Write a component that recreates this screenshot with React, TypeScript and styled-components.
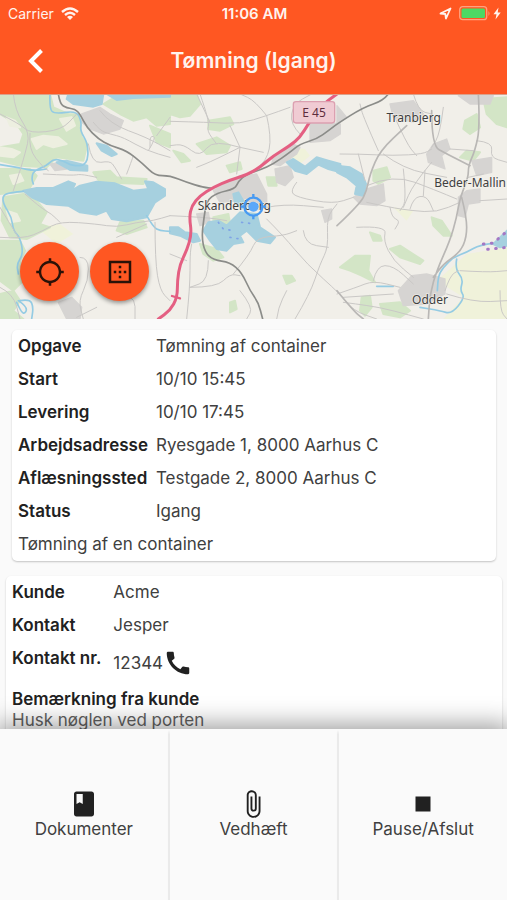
import React from "react";
import styled, { createGlobalStyle } from "styled-components";
import { MdAttachFile, MdBook, MdBorderOuter, MdCall, MdGpsNotFixed, MdStop } from "react-icons/md";

const GlobalStyle = createGlobalStyle`
  *, *::before, *::after { box-sizing: border-box; }
  body { margin: 0; background: #fafafa; }
  button { font: inherit; color: inherit; border: 0; padding: 0; cursor: pointer; }
`;

const Screen = styled.div`
  display: flex;
  flex-direction: column;
  height: 100vh;
  overflow: hidden;
  background: #fafafa;
  color: #404040;
  font-family: Inter, sans-serif;
  font-size: 17px;
  line-height: 21px;
`;

const Header = styled.header`
  flex: none;
  background: #ff5722;
  color: #fff3ee;
`;

const StatusBar = styled.div`
  display: grid;
  grid-template-columns: 1fr auto 1fr;
  align-items: center;
  height: 27px;
  padding: 0 6px 0 8px;
  font-size: 14px;
`;

const StatusGroup = styled.div<{ $end?: boolean }>`
  display: flex;
  align-items: center;
  gap: 7px;
  justify-content: ${(p) => (p.$end ? "flex-end" : "flex-start")};
`;

const Clock = styled.time`
  font-size: 15px;
  font-weight: 600;
`;

const AppBar = styled.div`
  display: grid;
  grid-template-columns: 70px 1fr 70px;
  align-items: center;
  height: 67px;
`;

const BackButton = styled.button`
  display: grid;
  place-items: center;
  height: 66px;
  background: none;
`;

const Title = styled.h1`
  margin: 0;
  text-align: center;
  font-size: 21px;
  line-height: 28px;
  font-weight: 600;
`;

const Content = styled.main`
  flex: 1;
  min-height: 0;
  overflow: hidden;
`;

const MapPanel = styled.section`
  position: relative;
  height: 225px;
  background: #f2efe9;
  overflow: hidden;
`;

const MapDrawing = styled.svg`
  display: block;
  width: 100%;
  height: 100%;
  font-family: "Noto Sans", sans-serif;
`;

const MapActions = styled.div`
  position: absolute;
  left: 20px;
  bottom: 18px;
  display: flex;
  gap: 11px;
`;

const RoundButton = styled.button`
  display: grid;
  place-items: center;
  width: 59px;
  height: 59px;
  border-radius: 50%;
  background: #ff5722;
  color: #2a1208;
  box-shadow: 0 2px 4px rgba(0, 0, 0, 0.4);
`;

const Card = styled.section<{ $wide?: boolean }>`
  margin: ${(p) => (p.$wide ? "15px 5px 0 6px" : "11px 11px 0 12px")};
  padding: 0 6px ${(p) => (p.$wide ? "12px" : "0")};
  border-radius: 5px;
  background: #fff;
  box-shadow: 0 1px 2px rgba(0, 0, 0, 0.22);
`;

const Details = styled.table<{ $gap: number }>`
  border-collapse: collapse;

  th {
    padding-right: ${(p) => p.$gap}px;
  }
`;

const Label = styled.th`
  padding: 6px 0;
  text-align: left;
  vertical-align: top;
  font-weight: 600;
  color: #212121;
  white-space: nowrap;
`;

const Value = styled.td`
  padding: 6px 0;
`;

const Note = styled.p`
  margin: 0;
  padding: 6px 0;
`;

const Phone = styled.a`
  display: flex;
  align-items: center;
  color: inherit;
  text-decoration: none;

  svg {
    color: #212121;
  }
`;

const RemarkTitle = styled.h2`
  margin: 5px 0 0;
  font-size: 17px;
  line-height: 21px;
  font-weight: 600;
  color: #212121;
`;

const Remark = styled.p`
  margin: 0;
  color: #616161;
`;

const ActionBar = styled.nav`
  position: relative;
  flex: none;
  display: grid;
  grid-template-columns: repeat(3, 1fr);
  gap: 2px;
  background: #fafafa;
  box-shadow: 0 0 24px 4px rgba(0, 0, 0, 0.4);
`;

const Action = styled.button`
  display: flex;
  flex-direction: column;
  align-items: center;
  justify-content: center;
  min-height: 171px;
  background: #fafafa;
  box-shadow: 0 3px 3px rgba(0, 0, 0, 0.12);

  svg {
    color: #212121;
  }
`;

const task = [
  ["Opgave", "Tømning af container"],
  ["Start", "10/10 15:45"],
  ["Levering", "10/10 17:45"],
  ["Arbejdsadresse", "Ryesgade 1, 8000 Aarhus C"],
  ["Aflæsningssted", "Testgade 2, 8000 Aarhus C"],
  ["Status", "Igang"],
];

const actions = [
  { label: "Dokumenter", Icon: MdBook },
  { label: "Vedhæft", Icon: MdAttachFile },
  { label: "Pause/Afslut", Icon: MdStop },
];

/* Rounds the corners of open polylines written as "M x y L x y x y ...". */
function smooth(paths: string[]) {
  return paths
    .flatMap((path) => path.split("M").filter(Boolean))
    .map((line) => {
      const n = (line.match(/-?\d+/g) ?? []).map(Number);
      let d = `M${n[0]} ${n[1]}`;
      for (let i = 2; i < n.length - 2; i += 2) {
        d += `Q${n[i]} ${n[i + 1]} ${(n[i] + n[i + 2]) / 2} ${(n[i + 1] + n[i + 3]) / 2}`;
      }
      return `${d}L${n[n.length - 2]} ${n[n.length - 1]}`;
    })
    .join("");
}

const forests = [
  "M0 0H150L160 40 205 60 238 62 245 130 262 150 250 200 170 190 140 220 60 215 0 200V160L60 150 70 120 50 90 0 60Z",
  "M310 30L340 12H510V90L470 95 440 70 400 80 360 60Z",
  "M0 225L90 225 110 245 85 290 0 300Z",
  "M10 310L70 300 110 320 140 355 120 390 150 400 80 435 30 430 5 380Z",
  "M0 440L60 440 75 470 60 500 70 560 40 590 0 560Z",
  "M280 235L330 230 350 250 440 255 430 270 300 265Z",
  "M360 385L430 380 440 400 380 420 350 410Z",
  "M450 95L510 120V160L470 145Z",
  "M0 600L40 590 60 620 40 650 70 675H0Z",
  "M510 0H590L600 30 570 65 540 70 510 60Z",
  "M625 80L690 70 700 90 660 110 625 105Z",
  "M590 150L650 130 690 155 680 175 620 180Z",
  "M680 215L720 205 725 225 690 235Z",
  "M520 170L550 180 570 200 545 205Z",
  "M640 370L685 360 690 385 660 400 640 395Z",
  "M600 450L650 465 670 490 640 500 610 480Z",
  "M850 545L875 545 885 560 860 570Z",
  "M800 250L825 250 830 275 805 275Z",
  "M690 625L705 620 710 645 690 655Z",
  "M1450 15L1521 10V100L1490 90 1460 60Z",
  "M1395 80L1430 60 1440 100 1410 120 1390 105Z",
  "M1120 230L1160 220 1170 250 1135 270 1120 260Z",
  "M1295 370L1325 380 1355 425 1330 425 1300 395Z",
  "M1110 415L1140 425 1145 440 1120 440Z",
  "M1020 520L1065 485 1110 485 1105 530 1125 565 1085 545 1050 530Z",
  "M1170 465L1200 455 1270 500 1260 510 1200 490Z",
  "M1085 610L1110 605 1115 640 1095 665 1080 650Z",
  "M1140 630L1200 625 1230 650 1200 670 1150 660Z",
  "M1380 190L1400 170 1440 175 1420 200Z",
];

const clearings = [
  "M20 70L45 80 60 100 30 95Z",
  "M95 135L130 125 175 130 200 150 160 160 130 150 110 165Z",
  "M0 160L35 165 60 175 40 190 0 185Z",
  "M180 75L215 70 225 95 200 110Z",
  "M30 245L60 240 70 260 40 270Z",
  "M20 350L50 360 60 380 30 385Z",
];

const towns = [
  "M245 60L300 40 330 60 370 80 360 105 310 120 270 105 245 85Z",
  "M175 625L215 610 245 640 240 675H200Z",
  "M150 210L190 205 200 225 165 230Z",
  "M640 290L720 245 770 240 800 300 800 340 760 350 720 320 660 325Z",
  "M590 360L625 355 630 385 600 395Z",
  "M820 190L880 150 900 160 890 180 840 215 815 210Z",
  "M825 225L870 215 880 250 855 275 830 265Z",
  "M930 80L1021 90V120L990 140 930 145Z",
  "M965 350L995 345 995 375 975 385Z",
  "M1060 310L1100 285 1150 270 1155 320 1130 335 1080 330Z",
  "M1280 180L1300 150 1340 135 1350 165 1325 185 1335 225 1285 205Z",
  "M1170 30L1240 20 1270 60 1240 85 1180 70Z",
  "M1375 5L1480 5 1470 30 1410 30Z",
  "M1400 290L1440 285 1440 325 1405 330 1395 370 1375 365 1375 310Z",
  "M1415 200L1475 190 1475 235 1430 245Z",
  "M1195 590L1235 545 1280 540 1335 555 1335 600 1280 630 1210 635Z",
  "M1011 35L1040 70 1011 90Z",
];

const lakes = [
  "M70 290L110 282 160 282 205 262 225 270 215 290 240 275 290 263 345 268 400 290 445 285 435 262 460 265 495 285 495 305 465 325 440 370 380 382 335 375 320 350 290 362 240 355 205 335 140 330 95 310Z",
  "M205 0H310L305 30 280 38 220 30 200 15Z",
  "M320 0H510V8L400 12 350 18Z",
  "M290 148L320 155 350 180 335 186 305 170Z",
  "M170 205L200 200 262 215 262 230 210 228Z",
  "M510 400L535 400 555 415 590 420 600 440 580 445 540 425 510 418Z",
  "M610 410L625 385 655 380 680 395 720 355 770 360 780 400 825 430 810 448 770 440 740 410 720 425 730 445 700 450 680 470 650 465 630 440Z",
  "M860 205L880 195 915 218 950 190 985 200 1021 210V235L985 225 955 212 920 240 885 230Z",
  "M1011 215L1050 220 1085 240 1098 270 1090 305 1065 300 1070 275 1040 250 1011 235Z",
  "M1480 450L1521 410V455L1500 460Z",
  "M700 300L715 295 735 330 725 345 705 325Z",
];

const streams = [
  "M150 0L148 45 165 60 230 50 245 85 240 110 265 150 262 215 215 215 190 200 160 195 140 215 100 230 95 255 100 270",
  "M0 212L60 222 100 230 140 225",
  "M70 292L30 295 8 305 10 330 35 370 40 410 60 430 70 480 50 510 55 540",
  "M440 365L460 400 480 410 510 412",
  "M60 620L90 615 100 640 95 675",
  "M55 620L85 640 70 665 50 625",
  "M1480 448L1440 452 1400 475 1360 490 1330 520 1315 545 1312 590",
  "M1370 495L1365 525 1390 555 1380 590 1395 610 1355 660 1320 650 1260 640",
  "M1130 577L1180 577",
];

const minorRoads = [
  "M40 0L45 50 90 118 75 180 60 230 40 290",
  "M0 60L60 90 90 118 185 108 230 60",
  "M90 118L85 165 130 220 145 230",
  "M280 85L300 110 330 120 370 130 440 170 510 190",
  "M300 50L330 90 440 130 510 170",
  "M265 150L275 210 330 200 345 220 365 255",
  "M380 240L395 200 400 185",
  "M130 240L220 245 240 240 290 250",
  "M0 430L70 435 130 410 180 382 290 390 350 400 410 385 460 380 510 365",
  "M75 300L120 340 155 360 180 385",
  "M0 340L30 390 55 430",
  "M350 430L440 390M465 385L465 500 480 590 510 620",
  "M240 490L265 490 265 560 235 620 250 675",
  "M340 590L405 600 405 675",
  "M0 580L40 600 60 675M290 640L230 670",
  "M445 170L470 130 450 125 450 160M470 125L510 70",
  "M510 82L630 85 720 90 800 65 870 40M630 85L590 0",
  "M800 65L765 20 720 0M800 65L815 130 800 200 750 240",
  "M720 160L640 135 600 190 550 150 510 155M720 160L790 175M720 160L710 240M720 160L640 200 590 220M720 160L690 95",
  "M600 0L630 85 620 110 650 150",
  "M900 120L870 90 880 30 935 0",
  "M800 375L850 425 920 510 1021 600 1060 650 1130 675",
  "M510 480L560 500M510 365L620 370 680 380",
  "M560 675L570 580 570 480 575 450M625 500L625 560 570 580",
  "M570 580L650 580 690 540 720 545",
  "M720 590L760 640 740 675M830 675L835 640 860 590",
  "M700 540L750 480 770 430 850 425 890 410",
  "M885 675L930 600 960 510 985 460 980 370 1011 330",
  "M890 265L870 290 890 310 1000 330 1060 310",
  "M800 340L850 330 970 340M910 410L915 450 985 460",
  "M1020 180L1080 180 1180 185 1270 180 1295 165M1075 180L1095 260",
  "M1135 170L1090 70 1080 30M1180 60L1220 150 1250 185",
  "M1150 180L1210 225 1340 250M1210 225L1220 320 1200 350",
  "M1295 205L1240 270 1210 340M1100 275L1180 240 1310 290 1370 315",
  "M1100 325L1170 340 1235 350 1310 355 1380 325",
  "M1070 400L1160 395 1150 440 1180 500 1240 550",
  "M1170 340L1175 370 1200 380 1185 405",
  "M1230 345L1240 310 1280 305 1300 350M1270 305L1275 230",
  "M1240 0L1255 50 1295 60M1330 40L1320 120 1295 160",
  "M1430 140L1480 145 1470 190 1521 205M1420 170L1350 165",
  "M1405 250L1450 240M1440 320L1521 315",
  "M1011 600L1070 580 1120 560 1200 580M1120 560L1130 515 1180 515 1240 570",
  "M1030 625L1110 635 1180 650 1270 675M1030 610L1180 600",
  "M1340 600L1420 625 1521 620M1380 530L1460 535 1521 530M1500 590L1500 650 1521 675",
  "M1335 590L1350 545 1375 530",
];

const mainRoads = [
  "M1435 0L1440 100 1425 170 1405 215 1405 250 1380 310 1370 370 1350 440 1310 530 1290 600 1285 675",
  "M1385 310L1400 370 1400 430 1380 475 1330 510 1300 550",
  "M1011 395L1080 330 1100 290 1110 240 1140 170 1220 95",
  "M1011 590L1060 650 1090 675",
  "M1295 50L1295 155 1340 180 1410 215",
];

const railways = [
  "M175 0L180 30 200 42 225 45 240 60 260 100 295 135 330 155 380 170 430 210 465 245 510 245 560 265 610 280 640 283",
  "M1165 0L1150 20 1090 40 1011 90 985 110 950 135 900 150 870 175 820 210 780 228 740 240 715 262 705 285 650 297 620 320 612 370 605 430 615 475 640 498 690 505 725 535 750 590 775 625 788 675",
];

const motorway = [
  "M1011 0L960 35 925 90 900 130 870 155 820 185 780 220 740 243 690 258 640 280 600 305 575 335 568 370 575 420 560 470 540 510 532 560 532 610 510 650 475 675",
];

function MapArt() {
  return (
    <MapDrawing viewBox="0 0 1521 675" preserveAspectRatio="xMidYMid slice" role="img" aria-label="Kort over Skanderborg">
      <rect width="1521" height="675" fill="#f1efe9" />
      <path d="M1311 560L1400 480 1521 460V675H1330L1390 610Z" fill="#f0f2da" />
      <path d="M870 160L915 165 930 185 900 210 875 195Z M110 400L180 390 220 420 170 450Z M1180 340L1240 350 1220 380Z" fill="#f0f2da" />
      <path d={forests.join("")} fill="#d3e5c6" stroke="#d3e5c6" strokeWidth="6" strokeLinejoin="round" />
      <path d={clearings.join("")} fill="#edefe0" stroke="#edefe0" strokeWidth="6" strokeLinejoin="round" />
      <path d={towns.join("")} fill="#d6d4d2" stroke="#d6d4d2" strokeWidth="4" strokeLinejoin="round" />
      <path d={lakes.join("")} fill="#a6d0df" stroke="#a6d0df" strokeWidth="6" strokeLinejoin="round" />
      <g fill="none" strokeLinejoin="round" strokeLinecap="round">
        <path d={smooth(streams)} stroke="#94cbe3" strokeWidth="5" />
        <path d={smooth(minorRoads)} stroke="#cac8c6" strokeWidth="3" />
        <path d={smooth(mainRoads)} stroke="#b9b7b5" strokeWidth="5" />
        <path d={smooth(railways)} stroke="#8b8c89" strokeWidth="5" />
        <path d={smooth(motorway)} stroke="#e45f82" strokeWidth="9" />
        <path d="M516 606L540 613" stroke="#e45f82" strokeWidth="7" />
        <path d="M655 385L670 405 700 410M690 430L720 435M725 385L765 390" stroke="#7fa3e6" strokeWidth="5" strokeDasharray="3 18" />
        <path d="M1450 450L1480 447 1521 412M1463 466L1521 460" stroke="#a477c4" strokeWidth="9" strokeDasharray="2 22" />
      </g>
      <path d="M0 0H1521V3H0Z" fill="#dba08a" />
      <rect x="880" y="23" width="124" height="64" rx="8" fill="#f0cbd3" stroke="#dca0b1" strokeWidth="4" />
      <g fill="#3f3f3f" fontSize="36" stroke="#f5f3ee" strokeWidth="5" strokeOpacity="0.7" paintOrder="stroke" textAnchor="middle">
        <text x="942" y="68" fontSize="36" fill="#5d2c3d" stroke="none">E 45</text>
        <text x="1241" y="84">Tranbjerg</text>
        <text x="703" y="348">Skanderborg</text>
        <text x="1518" y="278" textAnchor="end">Beder-Mallin</text>
        <text x="1290" y="630">Odder</text>
      </g>
      <g stroke="#479af2" strokeWidth="7" fill="none">
        <circle cx="760" cy="338" r="27" />
        <path d="M760 300V312M760 364V376M722 338H734M786 338H798" />
        <circle cx="760" cy="338" r="15" fill="#5ba8fa" stroke="none" />
      </g>
    </MapDrawing>
  );
}

function WifiIcon() {
  return (
    <svg width="18" height="14" viewBox="0 0 18 14" fill="none" stroke="currentColor" strokeWidth="2.4" aria-hidden="true">
      <path d="M1 5Q9 -2 17 5M4 8Q9 3.600 14 8" />
      <path d="M6 10Q9 7.600 12 10L9 13Z" fill="currentColor" stroke="none" />
    </svg>
  );
}

function LocationIcon() {
  return (
    <svg width="13" height="13" viewBox="0 0 13 13" fill="none" stroke="currentColor" strokeWidth="1.8" strokeLinejoin="round" aria-hidden="true">
      <path d="M1.500 6.500L11.500 1.500 7 11.500 6.300 7Z" />
    </svg>
  );
}

function BatteryIcon() {
  return (
    <svg width="42" height="15" viewBox="0 0 42 15" aria-hidden="true">
      <rect x="0.700" y="0.700" width="27" height="13" rx="3" fill="none" stroke="#ffa17f" strokeWidth="1.300" />
      <rect x="2.500" y="2.500" width="23.500" height="9.500" rx="1.500" fill="#4cd964" />
      <path d="M29.500 5V10Q31.500 7.500 29.500 5Z" fill="#ffa17f" />
      <path d="M39.500 1.500L34.500 8.300H37.500L36.500 13.500 41.700 6.500H38.700Z" fill="currentColor" />
    </svg>
  );
}

export default function App() {
  return (
    <Screen>
      <GlobalStyle />
      <Header>
        <StatusBar>
          <StatusGroup>
            <span>Carrier</span>
            <WifiIcon />
          </StatusGroup>
          <Clock>11:06 AM</Clock>
          <StatusGroup $end>
            <LocationIcon />
            <BatteryIcon />
          </StatusGroup>
        </StatusBar>
        <AppBar>
          <BackButton type="button" aria-label="Tilbage">
            <svg width="18" height="26" viewBox="0 0 18 26" fill="none" stroke="#fff" strokeWidth="4" aria-hidden="true">
              <path d="M15.500 2.500L5 13 15.500 23.500" />
            </svg>
          </BackButton>
          <Title>Tømning (Igang)</Title>
        </AppBar>
      </Header>
      <Content>
        <MapPanel>
          <MapArt />
          <MapActions>
            <RoundButton type="button" aria-label="Find min position">
              <MdGpsNotFixed size={30} />
            </RoundButton>
            <RoundButton type="button" aria-label="Vis hele området">
              <MdBorderOuter size={30} />
            </RoundButton>
          </MapActions>
        </MapPanel>
        <Card>
          <Details $gap={8}>
            <tbody>
              {task.map(([label, value]) => (
                <tr key={label}>
                  <Label scope="row">{label}</Label>
                  <Value>{value}</Value>
                </tr>
              ))}
            </tbody>
          </Details>
          <Note>Tømning af en container</Note>
        </Card>
        <Card $wide>
          <Details $gap={12}>
            <tbody>
              <tr>
                <Label scope="row">Kunde</Label>
                <Value>Acme</Value>
              </tr>
              <tr>
                <Label scope="row">Kontakt</Label>
                <Value>Jesper</Value>
              </tr>
              <tr>
                <Label scope="row">Kontakt nr.</Label>
                <Value>
                  <Phone href="tel:12344">
                    12344
                    <MdCall size={30} aria-hidden="true" />
                  </Phone>
                </Value>
              </tr>
            </tbody>
          </Details>
          <RemarkTitle>Bemærkning fra kunde</RemarkTitle>
          <Remark>Husk nøglen ved porten</Remark>
        </Card>
      </Content>
      <ActionBar>
        {actions.map(({ label, Icon }) => (
          <Action type="button" key={label}>
            <Icon size={30} aria-hidden="true" />
            <span>{label}</span>
          </Action>
        ))}
      </ActionBar>
    </Screen>
  );
}
